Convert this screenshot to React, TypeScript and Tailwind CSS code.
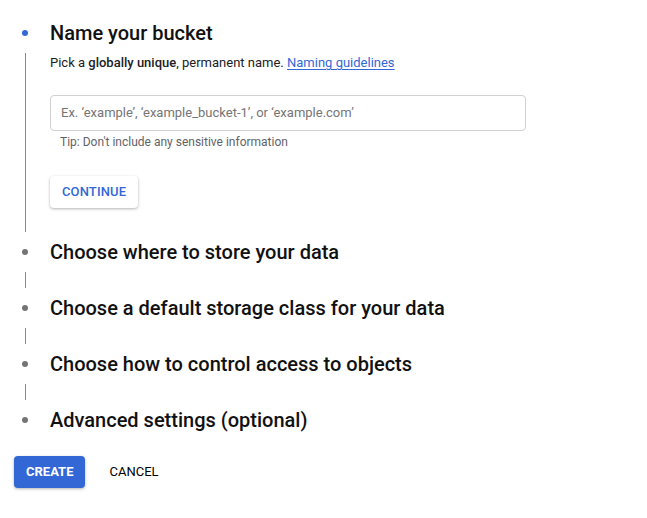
import React from "react";

function Dot({ active }: { active?: boolean }) {
  return (
    <div className="w-[50px] shrink-0">
      <div className={`ml-[22px] w-[6px] h-[6px] rounded-full ${active ? "bg-[#3367d6]" : "bg-[#757575]"}`} />
    </div>
  );
}

function Header({ title, active }: { title: string; active?: boolean }) {
  return (
    <div className="flex items-center h-6">
      <Dot active={active} />
      <div className="text-[20px] leading-6 text-[#111111] font-medium">{title}</div>
    </div>
  );
}

function Connector() {
  return (
    <div className="flex h-8 py-2">
      <div className="w-[50px] shrink-0">
        <div className="ml-[25px] w-px h-full bg-[#8a8a8a]" />
      </div>
    </div>
  );
}

export default function App() {
  return (
    <div className="min-h-[518px] w-[647px] bg-white pt-[21px]" style={{ fontFamily: "Roboto, 'Liberation Sans', sans-serif" }}>
      <Header title="Name your bucket" active />
      <div className="flex">
        <div className="w-[50px] shrink-0 py-2">
          <div className="ml-[25px] w-px h-full bg-[#8a8a8a]" />
        </div>
        <div className="pt-2 pb-8">
          <div className="text-[13px] leading-5 text-[#202124]">
            Pick a <span className="font-medium">globally unique</span>, permanent name.{" "}
            <a className="text-[#3367d6] underline underline-offset-2">Naming guidelines</a>
          </div>
          <div className="mt-[22px] w-[476px] h-[36px] border border-[#d0d0d0] rounded-[4px] flex items-center pl-[10px] text-[13px] text-[#757575]">
            Ex. ‘example’, ‘example_bucket-1’, or ‘example.com’
          </div>
          <div className="mt-[3px] pl-[10px] text-[12px] leading-4 text-[#5f6368]">
            Tip: Don't include any sensitive information
          </div>
          <button className="mt-[26px] h-8 px-3 rounded-[4px] bg-white shadow-[0_1px_3px_rgba(0,0,0,0.3)] text-[13px] font-medium text-[#3367d6] tracking-[0.01em]">
            CONTINUE
          </button>
        </div>
      </div>
      <Header title="Choose where to store your data" />
      <Connector />
      <Header title="Choose a default storage class for your data" />
      <Connector />
      <Header title="Choose how to control access to objects" />
      <Connector />
      <Header title="Advanced settings (optional)" />
      <div className="mt-6 ml-[14px] flex items-center gap-3">
        <button className="h-8 px-3 rounded-[4px] bg-[#3367d6] text-white text-[13px] font-bold shadow-[0_1px_3px_rgba(0,0,0,0.3)]">
          CREATE
        </button>
        <button className="h-8 px-3 text-[13px] font-normal text-black">CANCEL</button>
      </div>
    </div>
  );
}
